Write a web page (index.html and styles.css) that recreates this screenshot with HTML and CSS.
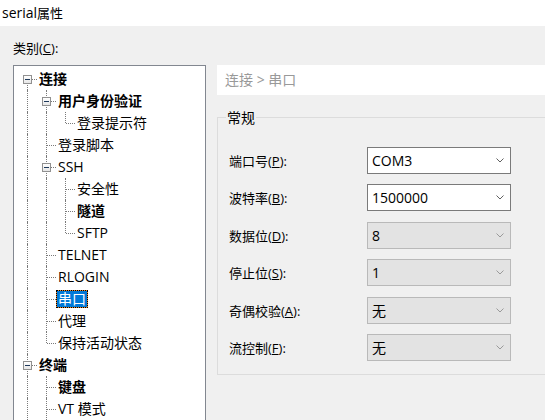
FILE: index.html
```html
<!DOCTYPE html>
<html lang="zh-CN">
<head>
<meta charset="utf-8">
<title>serial属性</title>
<link rel="stylesheet" href="styles.css">
</head>
<body>
<div class="window">
  <div class="titlebar">serial<span class="title-zh">属性</span></div>
  <div class="client">
    <div class="cat-label">类别(<u>C</u>):</div>
    <div class="main">
      <div class="tree">
        <div class="row"><span class="cn first next"><span class="box"></span></span><span class="txt b">连接</span></div>
        <div class="row"><span class="g v"></span><span class="cn next"><span class="box"></span></span><span class="txt b">用户身份验证</span></div>
        <div class="row"><span class="g v"></span><span class="g v"></span><span class="cn"></span><span class="txt">登录提示符</span></div>
        <div class="row"><span class="g v"></span><span class="cn next"></span><span class="txt">登录脚本</span></div>
        <div class="row"><span class="g v"></span><span class="cn next"><span class="box"></span></span><span class="txt">SSH</span></div>
        <div class="row"><span class="g v"></span><span class="g v"></span><span class="cn next"></span><span class="txt">安全性</span></div>
        <div class="row"><span class="g v"></span><span class="g v"></span><span class="cn next"></span><span class="txt b">隧道</span></div>
        <div class="row"><span class="g v"></span><span class="g v"></span><span class="cn"></span><span class="txt">SFTP</span></div>
        <div class="row"><span class="g v"></span><span class="cn next"></span><span class="txt">TELNET</span></div>
        <div class="row"><span class="g v"></span><span class="cn next"></span><span class="txt">RLOGIN</span></div>
        <div class="row"><span class="g v"></span><span class="cn next"></span><span class="txt sel">串口</span></div>
        <div class="row"><span class="g v"></span><span class="cn next"></span><span class="txt">代理</span></div>
        <div class="row"><span class="g v"></span><span class="cn"></span><span class="txt">保持活动状态</span></div>
        <div class="row"><span class="cn next"><span class="box"></span></span><span class="txt b">终端</span></div>
        <div class="row"><span class="g v"></span><span class="cn next"></span><span class="txt b">键盘</span></div>
        <div class="row"><span class="g v"></span><span class="cn next"></span><span class="txt">VT 模式</span></div>
      </div>
      <div class="panel">
        <div class="crumb">连接 &gt; 串口</div>
        <div class="group">
          <div class="group-title">常规</div>
          <div class="form">
            <div class="label">端口号(<u>P</u>):</div>
            <div class="combo"><span>COM3</span><svg class="chev" width="8" height="5" viewBox="0 0 8 5"><polyline points="0.5,0.5 4,4 7.5,0.5"/></svg></div>
            <div class="label">波特率(<u>B</u>):</div>
            <div class="combo"><span>1500000</span><svg class="chev" width="8" height="5" viewBox="0 0 8 5"><polyline points="0.5,0.5 4,4 7.5,0.5"/></svg></div>
            <div class="label">数据位(<u>D</u>):</div>
            <div class="combo dis"><span>8</span><svg class="chev" width="8" height="5" viewBox="0 0 8 5"><polyline points="0.5,0.5 4,4 7.5,0.5"/></svg></div>
            <div class="label">停止位(<u>S</u>):</div>
            <div class="combo dis"><span>1</span><svg class="chev" width="8" height="5" viewBox="0 0 8 5"><polyline points="0.5,0.5 4,4 7.5,0.5"/></svg></div>
            <div class="label">奇偶校验(<u>A</u>):</div>
            <div class="combo dis"><span>无</span><svg class="chev" width="8" height="5" viewBox="0 0 8 5"><polyline points="0.5,0.5 4,4 7.5,0.5"/></svg></div>
            <div class="label">流控制(<u>F</u>):</div>
            <div class="combo dis"><span>无</span><svg class="chev" width="8" height="5" viewBox="0 0 8 5"><polyline points="0.5,0.5 4,4 7.5,0.5"/></svg></div>
          </div>
        </div>
      </div>
    </div>
  </div>
</div>
</body>
</html>
```

FILE: styles.css
```css
html, body {
  margin: 0;
  padding: 0;
}
body {
  width: 545px;
  height: 420px;
  overflow: hidden;
  font-family: "Open Sans", "Noto Sans CJK SC", sans-serif;
  color: #000;
  background: #f0f0f0;
}
.window {
  width: 545px;
  height: 420px;
  overflow: hidden;
}
.titlebar {
  height: 26px;
  line-height: 26px;
  background: #fff;
  padding-left: 2px;
  font-size: 14px;
}
.title-zh {
  font-size: 13px;
}
.client {
  padding-left: 13px;
}
.cat-label {
  padding-top: 13px;
  margin-bottom: 8px;
  height: 18px;
  line-height: 18px;
  font-size: 13px;
}
.main {
  display: flex;
  align-items: flex-start;
}
.tree {
  flex: none;
  box-sizing: border-box;
  width: 193px;
  height: 420px;
  background: #fff;
  border: 1px solid #828790;
  padding-top: 2px;
}
.row {
  display: flex;
  align-items: center;
  height: 22px;
  padding-left: 4px;
  font-size: 14px;
}
.g, .cn {
  flex: none;
  position: relative;
  width: 19px;
  height: 22px;
}
.g.v::before {
  content: "";
  position: absolute;
  left: 9px;
  top: 0;
  bottom: 0;
  border-left: 1px dotted #7a7a7a;
}
.cn::before {
  content: "";
  position: absolute;
  left: 9px;
  top: 0;
  height: 11px;
  border-left: 1px dotted #7a7a7a;
}
.cn.next::before {
  height: 22px;
}
.cn.first::before {
  top: 11px;
  height: 11px;
}
.cn::after {
  content: "";
  position: absolute;
  left: 10px;
  top: 11px;
  width: 9px;
  border-top: 1px dotted #7a7a7a;
}
.box {
  position: absolute;
  z-index: 1;
  left: 5px;
  top: 7px;
  width: 7px;
  height: 7px;
  border: 1px solid #919191;
  background: linear-gradient(#ffffff, #e6e6e6);
}
.box::after {
  content: "";
  position: absolute;
  left: 1px;
  top: 3px;
  width: 5px;
  height: 1px;
  background: #1e395b;
}
.txt {
  padding: 0 2px;
  line-height: 18px;
  white-space: nowrap;
}
.txt.b {
  font-weight: 700;
}
.txt.sel {
  padding: 0 1px;
  line-height: 16px;
  background: #0078d7;
  color: #fff;
  border: 1px solid #e8872a;
  outline: 1px dotted #000;
  outline-offset: -1px;
}
.panel {
  flex: none;
  width: 350px;
  margin-left: 11px;
}
.crumb {
  height: 30px;
  line-height: 30px;
  padding-left: 8px;
  background: #fff;
  color: #999;
  font-size: 14px;
}
.group {
  margin-top: 22px;
  border: 1px solid #dcdcdc;
}
.group-title {
  width: fit-content;
  margin: -9px 0 0 8px;
  padding: 0 1px;
  line-height: 17px;
  background: #f0f0f0;
  font-size: 14px;
}
.form {
  display: grid;
  grid-template-columns: 138px 144px;
  row-gap: 10.4px;
  align-items: center;
  padding: 21px 0 13px 11px;
}
.label {
  font-size: 13px;
  white-space: nowrap;
}
.combo {
  box-sizing: border-box;
  height: 27px;
  display: flex;
  align-items: center;
  justify-content: space-between;
  padding: 0 6px 0 4px;
  border: 1px solid #7a7a7a;
  background: #fff;
  font-size: 14px;
}
.combo.dis {
  border-color: #b9b9b9;
  background: #e3e3e3;
}
.chev {
  fill: none;
  stroke: #606060;
  stroke-width: 1;
}
.combo.dis .chev {
  stroke: #9a9a9a;
}
```
